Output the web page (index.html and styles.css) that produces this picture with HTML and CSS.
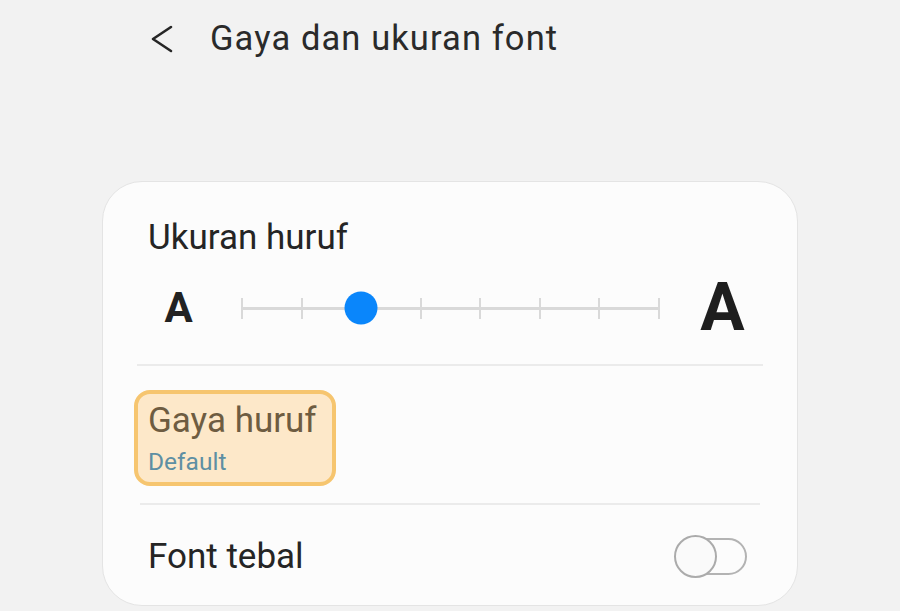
FILE: index.html
```html
<!DOCTYPE html>
<html lang="id">
<head>
<meta charset="utf-8">
<title>Gaya dan ukuran font</title>
<link rel="stylesheet" href="styles.css">
</head>
<body>
<header class="appbar">
  <svg class="back" width="24" height="30" viewBox="0 0 24 30" aria-hidden="true">
    <polyline points="20,2 2,14 20,26" fill="none" stroke="#262626" stroke-width="2.6" stroke-linecap="round" stroke-linejoin="round"/>
  </svg>
  <h1 class="title">Gaya dan ukuran font</h1>
</header>
<main class="card">
  <section class="size">
    <div class="label">Ukuran huruf</div>
    <div class="slider-row">
      <span class="a-small">A</span>
      <div class="track">
        <div class="line"></div>
        <div class="ticks">
          <i></i><i></i><i></i><i></i><i></i><i></i><i></i><i></i>
        </div>
        <div class="thumb" style="left: 28.5714%"></div>
      </div>
      <span class="a-big">A</span>
    </div>
  </section>
  <hr class="divider d1">
  <section class="style">
    <div class="highlight">
      <div class="label brown">Gaya huruf</div>
      <div class="sub">Default</div>
    </div>
  </section>
  <hr class="divider d2">
  <section class="bold-row">
    <div class="label">Font tebal</div>
    <div class="toggle">
      <div class="toggle-track"></div>
      <div class="toggle-thumb"></div>
    </div>
  </section>
</main>
</body>
</html>
```

FILE: styles.css
```css
* { box-sizing: border-box; }
html, body {
  margin: 0;
  padding: 0;
  background: #f2f2f2;
  font-family: Roboto, "Noto Sans", "Liberation Sans", sans-serif;
  color: #252525;
}
.appbar {
  height: 181px;
  display: flex;
  align-items: flex-start;
  padding-left: 151px;
  padding-top: 25px;
}
.back {
  display: block;
  margin-top: 0;
}
.title {
  margin: -7px 0 0 35px;
  font-weight: 400;
  font-size: 34.5px;
  letter-spacing: 1.1px;
  line-height: 40px;
  color: #2a2a2a;
}
.card {
  margin-left: 102px;
  width: 696px;
  height: 425px;
  background: #fcfcfc;
  border: 1px solid #e4e4e4;
  border-radius: 40px;
}
.label {
  font-size: 35px;
  line-height: 41px;
  color: #252525;
}
.size {
  padding: 35px 0 0 45px;
}
.slider-row {
  display: flex;
  align-items: center;
  height: 100px;
}
.a-small {
  width: 61px;
  text-align: center;
  font-weight: 700;
  font-size: 42px;
  color: #222;
  line-height: 1;
}
.a-big {
  width: 61px;
  margin-left: 32px;
  text-align: center;
  font-weight: 700;
  font-size: 66px;
  color: #1e1e1e;
  line-height: 1;
}
.track {
  position: relative;
  margin-left: 32px;
  width: 419px;
  height: 21px;
}
.line {
  position: absolute;
  left: 0;
  right: 0;
  top: 9px;
  height: 3px;
  background: #d9d9d9;
}
.ticks {
  display: flex;
  justify-content: space-between;
  height: 100%;
}
.ticks i {
  display: block;
  width: 2px;
  height: 21px;
  background: #d9d9d9;
}
.thumb {
  position: absolute;
  top: 50%;
  width: 33px;
  height: 33px;
  border-radius: 50%;
  background: #0a86fb;
  transform: translate(-50%, -50%);
}
.divider {
  border: 0;
  height: 2px;
  background: #ebebeb;
  margin: 0;
}
.d1 { margin: 6px 34px 0; }
.d2 { margin: 17px 37px 0; }
.style {
  padding: 24px 0 0 31px;
}
.highlight {
  width: 202px;
  height: 96px;
  border: 4px solid #f6c56f;
  background: #fde8c9;
  border-radius: 16px;
  padding: 6px 0 0 10px;
}
.label.brown {
  color: #6e5c41;
}
.sub {
  margin-top: 7px;
  font-size: 24.5px;
  line-height: 28px;
  color: #5e8fa3;
}
.bold-row {
  display: flex;
  align-items: center;
  justify-content: space-between;
  height: 98px;
  padding: 4px 50px 0 45px;
}
.toggle {
  position: relative;
  width: 73px;
  height: 43px;
}
.toggle-track {
  position: absolute;
  left: 4px;
  right: 0;
  top: 3px;
  height: 37px;
  border: 2px solid #b3b3b3;
  border-radius: 19px;
}
.toggle-thumb {
  position: absolute;
  left: 0;
  top: 0;
  width: 43px;
  height: 43px;
  border-radius: 50%;
  border: 2px solid #ababab;
  background: #fafafa;
}
```
